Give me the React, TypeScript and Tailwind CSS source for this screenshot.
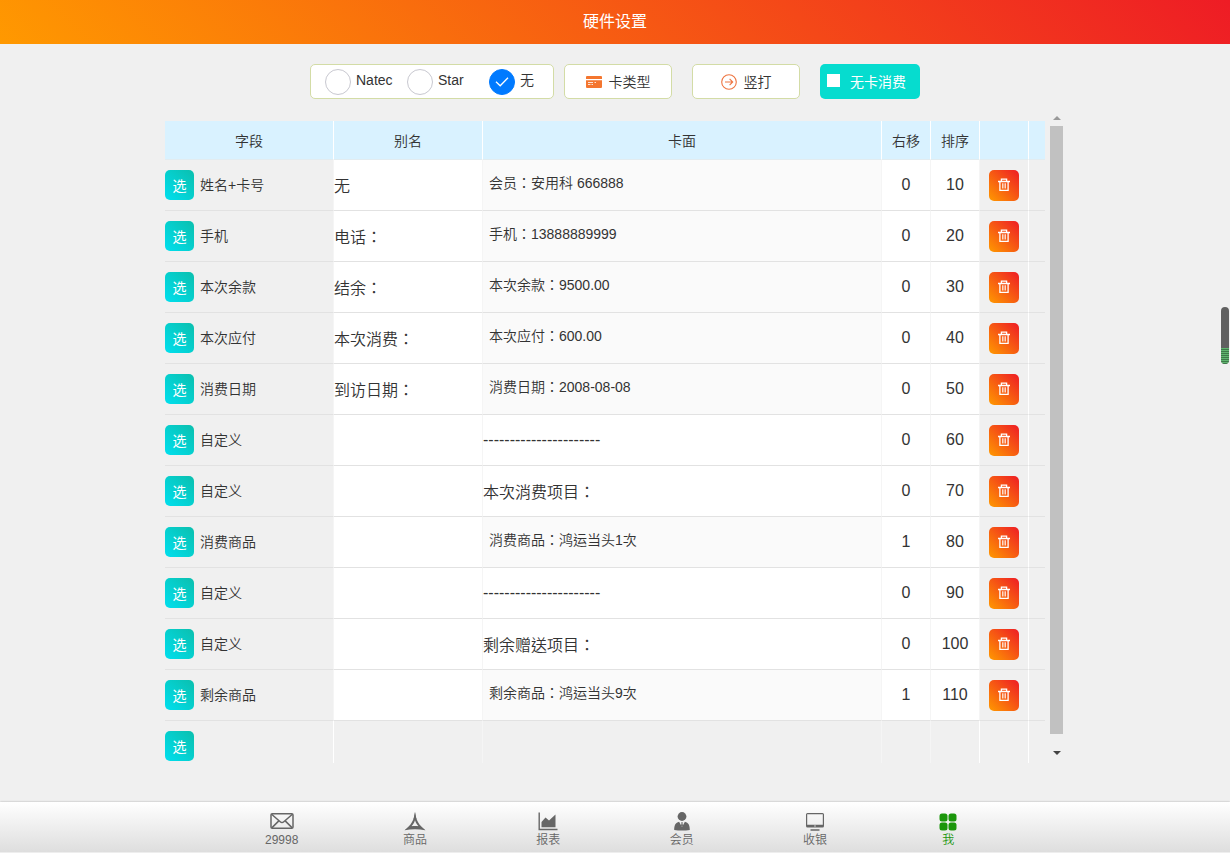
import React, { useState } from 'react';

type Row = {
  field: string;
  alias: string;
  face: string;
  custom?: boolean;
  shift: string;
  order: string;
};

const initialRows: Row[] = [
  { field: '姓名+卡号', alias: '无', face: '会员：安用科 666888', shift: '0', order: '10' },
  { field: '手机', alias: '电话：', face: '手机：13888889999', shift: '0', order: '20' },
  { field: '本次余款', alias: '结余：', face: '本次余款：9500.00', shift: '0', order: '30' },
  { field: '本次应付', alias: '本次消费：', face: '本次应付：600.00', shift: '0', order: '40' },
  { field: '消费日期', alias: '到访日期：', face: '消费日期：2008-08-08', shift: '0', order: '50' },
  { field: '自定义', alias: '', face: '----------------------', custom: true, shift: '0', order: '60' },
  { field: '自定义', alias: '', face: '本次消费项目：', custom: true, shift: '0', order: '70' },
  { field: '消费商品', alias: '', face: '消费商品：鸿运当头1次', shift: '1', order: '80' },
  { field: '自定义', alias: '', face: '----------------------', custom: true, shift: '0', order: '90' },
  { field: '自定义', alias: '', face: '剩余赠送项目：', custom: true, shift: '0', order: '100' },
  { field: '剩余商品', alias: '', face: '剩余商品：鸿运当头9次', shift: '1', order: '110' },
];

const colonFont = "font-['Liberation_Sans','Noto_Sans_CJK_TC',sans-serif]";
const inputBase = 'block h-[50px] w-full bg-white text-base leading-6 text-[#333] outline-none';

function TrashIcon() {
  return (
    <svg width="12" height="14" viewBox="0 0 12 14" fill="none" stroke="#fff" strokeWidth="1.3" aria-hidden="true">
      <path d="M0 3.500h12M3.400 3.200V1.200h5.200v2M1.900 3.600v8.800h8.200V3.600" />
      <path d="M4.800 5.200v5.400M7.200 5.200v5.400" opacity=".9" />
    </svg>
  );
}

function CardIcon() {
  return (
    <svg width="16" height="12" viewBox="0 0 16 12" aria-hidden="true">
      <path fill="#f4762f" d="M1 0h14a1 1 0 0 1 1 1v2H0V1a1 1 0 0 1 1-1zM0 4.200h16V11a1 1 0 0 1-1 1H1a1 1 0 0 1-1-1z" />
      <path stroke="#fff" strokeWidth="1" opacity=".8" d="M2 6.500h5M2 8.500h2.500M5.500 8.500h1.500M8.500 6.500h1.500" />
    </svg>
  );
}

function ArrowIcon() {
  return (
    <svg width="16" height="16" viewBox="0 0 16 16" fill="none" stroke="#ee7440" strokeWidth="1.1" aria-hidden="true">
      <circle cx="8" cy="8" r="7.3" />
      <path d="M4 8h7.6M8.6 4.9l3.1 3.1-3.1 3.1" />
    </svg>
  );
}

const navItems = [
  {
    label: '29998',
    icon: (
      <svg width="24" height="19" viewBox="0 0 24 19" fill="none" stroke="#666" strokeWidth="1.5">
        <rect x="1" y="1.700" width="22" height="14.6" rx="1.2" />
        <path d="M1.6 2.200l8.600 7.500c1 .9 2.600.9 3.600 0l8.600-7.500M1.800 15.900l7-7M22.200 15.900l-7-7" />
      </svg>
    ),
  },
  {
    label: '商品',
    icon: (
      <svg width="22" height="19" viewBox="0 0 22 19" fill="#666" fillRule="evenodd">
        <path d="M11 0c.8 7.600 4 13.600 10.400 18.300-6.900-1.300-13.900-1.300-20.800 0C7 13.600 10.200 7.600 11 0zM11 8c-.7 2.700-1.900 4.700-3.700 6.300 2.500-.5 4.900-.5 7.400 0C12.900 12.700 11.700 10.700 11 8z" />
        <path d="M11 0l1.400 7L11 9 9.600 7zM.6 18.300L6 13.600l2 .5-.6 1.700zM21.400 18.300L16 13.600l-2 .5.6 1.700z" />
      </svg>
    ),
  },
  {
    label: '报表',
    icon: (
      <svg width="20" height="19" viewBox="0 0 20 19" fill="#666">
        <path d="M.5 .5h1.400v16.300H19.500v1.500H.5zM3.500 15.300V10l4-4.500 3.500 3 6.500-6v12.800z" />
      </svg>
    ),
  },
  {
    label: '会员',
    icon: (
      <svg width="18" height="19" viewBox="0 0 18 19" fill="#666">
        <circle cx="9" cy="4.500" r="4.400" />
        <path d="M1.200 18c0-5 1.400-7.400 4.900-8.300L9 15l2.900-5.300c3.500.9 4.900 3.300 4.900 8.300-5 .7-10.600.7-15.600 0z" />
        <path d="M8.200 10.300h1.600l-.3 1.200.5 2L9 15 8 13.500l.5-2z" />
      </svg>
    ),
  },
  {
    label: '收银',
    icon: (
      <svg width="20" height="19" viewBox="0 0 20 19" fill="#666" fillRule="evenodd">
        <path d="M2.500 1h15A1.500 1.500 0 0 1 19 2.500V14a1.500 1.500 0 0 1-1.500 1.500h-15A1.500 1.500 0 0 1 1 14V2.500A1.500 1.500 0 0 1 2.500 1zM2.200 2.200v10.600h15.600V2.200zM9.300 13.500v1h1.400v-1zM5.500 17.200h9v1.600h-9z" />
      </svg>
    ),
  },
  {
    label: '我',
    active: true,
    icon: (
      <svg width="18" height="19" viewBox="0 0 18 19" fill="#1b960b">
        <rect x=".5" y="1.500" width="8" height="8" rx="2.500" />
        <rect x="9.500" y="1.500" width="8" height="8" rx="2.500" />
        <rect x=".5" y="10.500" width="8" height="8" rx="2.500" />
        <rect x="9.500" y="10.500" width="8" height="8" rx="2.500" />
      </svg>
    ),
  },
];

function SelectButton() {
  return (
    <button
      type="button"
      className="h-[30px] w-[29px] shrink-0 rounded-[5px] bg-[linear-gradient(45deg,#00dfee,#0bbfae)] pt-0.5 text-sm font-normal text-white"
    >
      选
    </button>
  );
}

export default function App() {
  const [printer, setPrinter] = useState('无');
  const [rows, setRows] = useState(initialRows);

  const update = (index: number, key: keyof Row, value: string) =>
    setRows(rows.map((row, i) => (i === index ? { ...row, [key]: value } : row)));

  const td = 'border-r border-b border-r-[#f5f5f5] border-b-[#e2e2e2] p-0';
  const th = 'border-r border-b border-r-white border-b-[#e2ecf0] p-0 pt-0.5 font-[350]';
  const tool = 'flex h-[35px] items-center justify-center rounded-[5px] border border-[#d3dca6] bg-white';

  return (
    <div className="flex min-h-screen flex-col bg-[#f0f0f0] font-['Liberation_Sans','Noto_Sans_CJK_SC',sans-serif] text-sm font-[350] text-[#333]">
      <header className="flex h-11 items-center justify-center bg-[linear-gradient(45deg,#ff9900,#ee1c25)]">
        <h1 className="text-base font-normal text-white">硬件设置</h1>
      </header>

      <main className="flex flex-1 flex-col items-center pt-5">
        <div className="flex">
          <div className="flex h-[35px] w-[244px] items-center rounded-[5px] border border-[#d3dca6] bg-white pl-3.5">
            {['Natec', 'Star', '无'].map((name) => (
              <label key={name} className="flex w-[82px] shrink-0 items-center gap-[5px] last:w-auto">
                <span className="grid size-[26px] place-items-center">
                  <input
                    type="radio"
                    name="printer"
                    checked={printer === name}
                    onChange={() => setPrinter(name)}
                    className="col-start-1 row-start-1 size-[26px] appearance-none rounded-full border border-[#c8c8d0] bg-white checked:border-[#007aff] checked:bg-[#007aff]"
                  />
                  {printer === name && (
                    <svg
                      className="pointer-events-none col-start-1 row-start-1"
                      width="14"
                      height="10"
                      viewBox="0 0 14 10"
                      fill="none"
                      stroke="#fff"
                      strokeWidth="1.300"
                    >
                      <path d="M1 4.800l4.200 4L13 .8" />
                    </svg>
                  )}
                </span>
                <span className="pb-1">{name}</span>
              </label>
            ))}
          </div>
          <button type="button" className={`${tool} ml-2.5 w-[108px] gap-[7px]`}>
            <CardIcon />
            卡类型
          </button>
          <button type="button" className={`${tool} ml-5 w-[108px] gap-[7px]`}>
            <ArrowIcon />
            竖打
          </button>
          <label className="ml-5 flex h-[35px] w-[100px] items-center rounded-[5px] bg-[#06dccf] pl-[7px] font-normal text-white">
            <input type="checkbox" className="mr-2.5 mb-0.5 size-[13px] appearance-none bg-white checked:bg-[#0a8a82]" />
            无卡消费
          </label>
        </div>

        <div className="mt-[17px] flex w-[900px] max-w-full items-start gap-[5px]">
          <table className="mt-[5px] min-w-0 flex-1 table-fixed border-separate border-spacing-0">
            <colgroup>
              <col className="w-[169px]" />
              <col className="w-[149px]" />
              <col />
              <col className="w-[49px]" />
              <col className="w-[49px]" />
              <col className="w-[49px]" />
              <col className="w-4" />
            </colgroup>
            <thead>
              <tr className="h-[39px] bg-[#d9f2ff]">
                <th className={th}>字段</th>
                <th className={th}>别名</th>
                <th className={th}>卡面</th>
                <th className={th}>右移</th>
                <th className={th}>排序</th>
                <th className={th} />
                <th className="border-b border-b-[#e2ecf0] p-0" />
              </tr>
            </thead>
            <tbody>
              {rows.map((row, i) => (
                <tr key={i} className="h-[51px]">
                  <td className={td}>
                    <div className="flex items-center gap-1.5">
                      <SelectButton />
                      <span>{row.field}</span>
                    </div>
                  </td>
                  <td className={td}>
                    <input
                      aria-label="别名"
                      value={row.alias}
                      onChange={(e) => update(i, 'alias', e.target.value)}
                      className={`${inputBase} ${colonFont}`}
                    />
                  </td>
                  {row.custom ? (
                    <td className={td}>
                      <input
                        aria-label="卡面"
                        value={row.face}
                        onChange={(e) => update(i, 'face', e.target.value)}
                        className={`${inputBase} ${colonFont}`}
                      />
                    </td>
                  ) : (
                    <td className={`${td} bg-[#fafafa]`}>
                      <div className={`${colonFont} pb-1 pl-1.5`}>{row.face}</div>
                    </td>
                  )}
                  <td className={td}>
                    <input
                      aria-label="右移"
                      value={row.shift}
                      onChange={(e) => update(i, 'shift', e.target.value)}
                      className={`${inputBase} text-center`}
                    />
                  </td>
                  <td className={td}>
                    <input
                      aria-label="排序"
                      value={row.order}
                      onChange={(e) => update(i, 'order', e.target.value)}
                      className={`${inputBase} text-center`}
                    />
                  </td>
                  <td className="border-r border-b border-r-white border-b-[#e2e2e2] p-0">
                    <button
                      type="button"
                      aria-label="删除"
                      onClick={() => setRows(rows.filter((_, j) => j !== i))}
                      className="mx-auto flex h-[31px] w-[30px] items-center justify-center rounded-[5px] bg-[linear-gradient(45deg,#ff9900,#ee1c25)]"
                    >
                      <TrashIcon />
                    </button>
                  </td>
                  <td className="border-b border-b-[#e2e2e2] p-0" />
                </tr>
              ))}
              <tr className="h-[42px]">
                <td className="border-r border-white p-0 pt-2.5 align-top">
                  <div className="flex">
                    <SelectButton />
                  </div>
                </td>
                <td className="border-r border-[#f5f5f5]" />
                <td className="border-r border-[#f5f5f5]" />
                <td className="border-r border-[#f5f5f5]" />
                <td className="border-r border-white" />
                <td className="border-r border-white" />
                <td />
              </tr>
            </tbody>
          </table>
          <div className="mr-0.5 flex w-[13px] flex-col items-center self-stretch pb-2" aria-hidden="true">
            <svg width="8" height="4" viewBox="0 0 8 4">
              <path d="M4 0l4 4H0z" fill="#999" />
            </svg>
            <div className="mt-1.5 mb-[17px] w-full flex-1 bg-[#c1c1c1]" />
            <svg width="8" height="4" viewBox="0 0 8 4">
              <path d="M0 0h8L4 4z" fill="#444" />
            </svg>
          </div>
        </div>
      </main>

      <nav className="flex h-[51px] justify-center border-b border-[#eee] bg-linear-to-b from-white to-[#dedede] shadow-[0_0_2px_rgba(0,0,0,0.3)]">
        <div className="grid w-[800px] grid-cols-6">
          {navItems.map((item) => (
            <a
              key={item.label}
              href="#"
              className={`flex flex-col items-center gap-px pt-2.5 text-xs leading-4 ${item.active ? 'text-[#1b960b]' : 'text-[#666]'}`}
            >
              {item.icon}
              {item.label}
            </a>
          ))}
        </div>
      </nav>

      <div
        className="fixed top-[307px] right-px flex h-[57px] w-2 flex-col justify-end overflow-hidden rounded-full bg-[#606060]"
        aria-hidden="true"
      >
        <div className="h-4 bg-[repeating-linear-gradient(to_bottom,#5fb56f_0px,#5fb56f_1px,#3d7a49_1px,#3d7a49_2px)]" />
      </div>
    </div>
  );
}
